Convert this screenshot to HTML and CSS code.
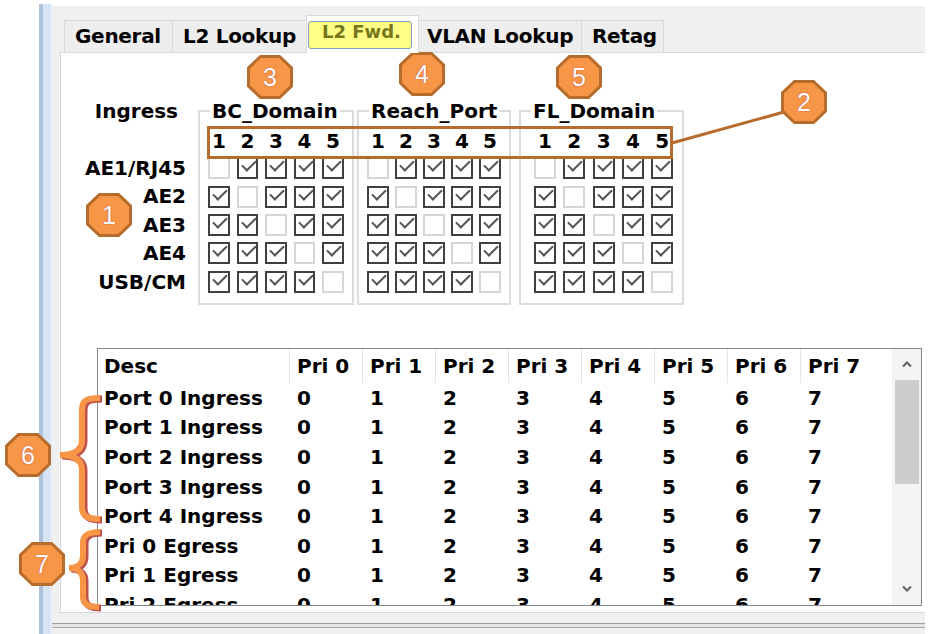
FILE: index.html
```html
<!DOCTYPE html>
<html>
<head>
<meta charset="utf-8">
<title>L2 Fwd.</title>
<link rel="stylesheet" href="styles.css">
</head>
<body>
<div class="window">
  <div class="sidebar"></div>
  <div class="main">
    <div class="tabs">
      <div class="tab t-gen">General</div>
      <div class="tab t-l2l">L2 Lookup</div>
      <div class="tab active"><span class="hl">L2 Fwd.</span></div>
      <div class="tab t-vlan">VLAN Lookup</div>
      <div class="tab t-retag">Retag</div>
    </div>
    <div class="panel">
      <div class="matrix">
        <div class="labels">
          <div class="lbl head">Ingress</div>
          <div class="lbl-gap"></div>
          <div class="lbl">AE1/RJ45</div>
          <div class="lbl">AE2</div>
          <div class="lbl">AE3</div>
          <div class="lbl">AE4</div>
          <div class="lbl">USB/CM</div>
        </div>
        <div class="grp grp-bc">
          <div class="grp-title">BC_Domain</div>
          <div class="nums"><span>1</span><span>2</span><span>3</span><span>4</span><span>5</span></div>
          <div class="cbrow first"><span class="cb"></span><span class="cb on"></span><span class="cb on"></span><span class="cb on"></span><span class="cb on"></span></div>
          <div class="cbrow"><span class="cb on"></span><span class="cb"></span><span class="cb on"></span><span class="cb on"></span><span class="cb on"></span></div>
          <div class="cbrow"><span class="cb on"></span><span class="cb on"></span><span class="cb"></span><span class="cb on"></span><span class="cb on"></span></div>
          <div class="cbrow"><span class="cb on"></span><span class="cb on"></span><span class="cb on"></span><span class="cb"></span><span class="cb on"></span></div>
          <div class="cbrow"><span class="cb on"></span><span class="cb on"></span><span class="cb on"></span><span class="cb on"></span><span class="cb"></span></div>
        </div>
        <div class="grp grp-rp">
          <div class="grp-title">Reach_Port</div>
          <div class="nums"><span>1</span><span>2</span><span>3</span><span>4</span><span>5</span></div>
          <div class="cbrow first"><span class="cb"></span><span class="cb on"></span><span class="cb on"></span><span class="cb on"></span><span class="cb on"></span></div>
          <div class="cbrow"><span class="cb on"></span><span class="cb"></span><span class="cb on"></span><span class="cb on"></span><span class="cb on"></span></div>
          <div class="cbrow"><span class="cb on"></span><span class="cb on"></span><span class="cb"></span><span class="cb on"></span><span class="cb on"></span></div>
          <div class="cbrow"><span class="cb on"></span><span class="cb on"></span><span class="cb on"></span><span class="cb"></span><span class="cb on"></span></div>
          <div class="cbrow"><span class="cb on"></span><span class="cb on"></span><span class="cb on"></span><span class="cb on"></span><span class="cb"></span></div>
        </div>
        <div class="grp grp-fl">
          <div class="grp-title">FL_Domain</div>
          <div class="nums"><span>1</span><span>2</span><span>3</span><span>4</span><span>5</span></div>
          <div class="cbrow first"><span class="cb"></span><span class="cb on"></span><span class="cb on"></span><span class="cb on"></span><span class="cb on"></span></div>
          <div class="cbrow"><span class="cb on"></span><span class="cb"></span><span class="cb on"></span><span class="cb on"></span><span class="cb on"></span></div>
          <div class="cbrow"><span class="cb on"></span><span class="cb on"></span><span class="cb"></span><span class="cb on"></span><span class="cb on"></span></div>
          <div class="cbrow"><span class="cb on"></span><span class="cb on"></span><span class="cb on"></span><span class="cb"></span><span class="cb on"></span></div>
          <div class="cbrow"><span class="cb on"></span><span class="cb on"></span><span class="cb on"></span><span class="cb on"></span><span class="cb"></span></div>
        </div>
      </div>

      <div class="list">
        <div class="grid">
          <div class="row hdr"><div class="c d">Desc</div><div class="c">Pri 0</div><div class="c">Pri 1</div><div class="c">Pri 2</div><div class="c">Pri 3</div><div class="c">Pri 4</div><div class="c">Pri 5</div><div class="c">Pri 6</div><div class="c">Pri 7</div></div>
          <div class="row"><div class="c d">Port 0 Ingress</div><div class="c">0</div><div class="c">1</div><div class="c">2</div><div class="c">3</div><div class="c">4</div><div class="c">5</div><div class="c">6</div><div class="c">7</div></div>
          <div class="row"><div class="c d">Port 1 Ingress</div><div class="c">0</div><div class="c">1</div><div class="c">2</div><div class="c">3</div><div class="c">4</div><div class="c">5</div><div class="c">6</div><div class="c">7</div></div>
          <div class="row"><div class="c d">Port 2 Ingress</div><div class="c">0</div><div class="c">1</div><div class="c">2</div><div class="c">3</div><div class="c">4</div><div class="c">5</div><div class="c">6</div><div class="c">7</div></div>
          <div class="row"><div class="c d">Port 3 Ingress</div><div class="c">0</div><div class="c">1</div><div class="c">2</div><div class="c">3</div><div class="c">4</div><div class="c">5</div><div class="c">6</div><div class="c">7</div></div>
          <div class="row"><div class="c d">Port 4 Ingress</div><div class="c">0</div><div class="c">1</div><div class="c">2</div><div class="c">3</div><div class="c">4</div><div class="c">5</div><div class="c">6</div><div class="c">7</div></div>
          <div class="row"><div class="c d">Pri 0 Egress</div><div class="c">0</div><div class="c">1</div><div class="c">2</div><div class="c">3</div><div class="c">4</div><div class="c">5</div><div class="c">6</div><div class="c">7</div></div>
          <div class="row"><div class="c d">Pri 1 Egress</div><div class="c">0</div><div class="c">1</div><div class="c">2</div><div class="c">3</div><div class="c">4</div><div class="c">5</div><div class="c">6</div><div class="c">7</div></div>
          <div class="row"><div class="c d">Pri 2 Egress</div><div class="c">0</div><div class="c">1</div><div class="c">2</div><div class="c">3</div><div class="c">4</div><div class="c">5</div><div class="c">6</div><div class="c">7</div></div>
        </div>
        <div class="scroll">
          <div class="sb-btn"><svg width="12" height="8" viewBox="0 0 12 8"><polyline points="2,6.5 6,2.5 10,6.5" fill="none" stroke="#606060" stroke-width="2"/></svg></div>
          <div class="thumb"></div>
          <div class="sb-space"></div>
          <div class="sb-btn"><svg width="12" height="8" viewBox="0 0 12 8"><polyline points="2,1.5 6,5.5 10,1.5" fill="none" stroke="#606060" stroke-width="2"/></svg></div>
        </div>
      </div>
    </div>
    <div class="footer"></div>
  </div>
</div>

<div class="callout-rect"></div>
<svg class="overlay" width="930" height="634" viewBox="0 0 930 634">
  <line x1="672" y1="143" x2="784" y2="112" stroke="#b66c2c" stroke-width="3"/>
  <path d="M100 398 C87 398 82 400 82 410 L82 440 C82 450 75 455 60 455 C75 455 82 460 82 470 L82 507 C82 516 87 519 100 519" fill="none" stroke="#c0504d" stroke-width="7" transform="translate(2 1)"/>
  <path d="M100 398 C87 398 82 400 82 410 L82 440 C82 450 75 455 60 455 C75 455 82 460 82 470 L82 507 C82 516 87 519 100 519" fill="none" stroke="#f79646" stroke-width="6"/>
  <path d="M100 532 C88 532 83 535 83 543 L83 556 C83 563 78 568 69 568 C78 568 83 573 83 580 L83 597 C83 604 88 607 99 607" fill="none" stroke="#c0504d" stroke-width="7" transform="translate(2 1)"/>
  <path d="M100 532 C88 532 83 535 83 543 L83 556 C83 563 78 568 69 568 C78 568 83 573 83 580 L83 597 C83 604 88 607 99 607" fill="none" stroke="#f79646" stroke-width="6"/>
</svg>

<div class="badge b1"><svg class="oct" viewBox="0 0 46 44"><polygon points="13.5,1.5 32.5,1.5 44.5,13 44.5,31 32.5,42.5 13.5,42.5 1.5,31 1.5,13"/></svg><span>1</span></div>
<div class="badge b2"><svg class="oct" viewBox="0 0 46 44"><polygon points="13.5,1.5 32.5,1.5 44.5,13 44.5,31 32.5,42.5 13.5,42.5 1.5,31 1.5,13"/></svg><span>2</span></div>
<div class="badge b3"><svg class="oct" viewBox="0 0 46 44"><polygon points="13.5,1.5 32.5,1.5 44.5,13 44.5,31 32.5,42.5 13.5,42.5 1.5,31 1.5,13"/></svg><span>3</span></div>
<div class="badge b4"><svg class="oct" viewBox="0 0 46 44"><polygon points="13.5,1.5 32.5,1.5 44.5,13 44.5,31 32.5,42.5 13.5,42.5 1.5,31 1.5,13"/></svg><span>4</span></div>
<div class="badge b5"><svg class="oct" viewBox="0 0 46 44"><polygon points="13.5,1.5 32.5,1.5 44.5,13 44.5,31 32.5,42.5 13.5,42.5 1.5,31 1.5,13"/></svg><span>5</span></div>
<div class="badge b6"><svg class="oct" viewBox="0 0 46 44"><polygon points="13.5,1.5 32.5,1.5 44.5,13 44.5,31 32.5,42.5 13.5,42.5 1.5,31 1.5,13"/></svg><span>6</span></div>
<div class="badge b7"><svg class="oct" viewBox="0 0 46 44"><polygon points="13.5,1.5 32.5,1.5 44.5,13 44.5,31 32.5,42.5 13.5,42.5 1.5,31 1.5,13"/></svg><span>7</span></div>
</body>
</html>
```
FILE: styles.css
```css
* { box-sizing: border-box; }

body {
  margin: 0;
  width: 930px;
  height: 634px;
  overflow: hidden;
  position: relative;
  background: #ffffff;
  font-family: "DejaVu Sans", Verdana, sans-serif;
  font-weight: bold;
  font-size: 20px;
  color: #000000;
}

.window {
  display: flex;
  margin: 4px 0 0 39px;
  width: 886px;
  height: 630px;
}

.sidebar {
  width: 13px;
  border-left: 4px solid #adc3dc;
  border-right: 2px solid #e4ecf5;
  background: #d5e4f4;
}

.main {
  flex: 1;
  margin-top: 2px;
  padding-top: 14px;
  background: #f0f0f0;
  display: flex;
  flex-direction: column;
}

/* tabs */
.tabs {
  display: flex;
  align-items: flex-end;
  height: 32px;
  margin-left: 12px;
}
.tab {
  height: 32px;
  padding: 0 0 0 10px;
  margin-right: -1px;
  border: 1px solid #d9d9d9;
  border-bottom: none;
  background: #eeeeee;
  line-height: 30px;
  white-space: nowrap;
  letter-spacing: -0.3px;
  overflow: hidden;
}
.t-gen { width: 109px; padding-left: 10px; }
.t-l2l { width: 135px; padding-left: 10px; }
.t-vlan { width: 164px; padding-left: 8px; }
.t-retag { width: 83px; padding-left: 10px; }
.tab.active {
  width: 113px;
  height: 38px;
  margin-bottom: -1px;
  padding: 5px 0 0 1px;
  background: #ffffff;
  position: relative;
  z-index: 1;
  letter-spacing: 0;
}
.hl {
  display: block;
  width: 104px;
  height: 28px;
  line-height: 20px;
  padding-left: 13px;
  font-size: 18px;
  background: #ffff86;
  border: 1px solid #7f9fc6;
  border-radius: 3px;
  color: #76761c;
}

/* panel */
.panel {
  margin-left: 8px;
  height: 561px;
  background: #ffffff;
  border: 1px solid #d9d9d9;
  border-right: none;
}

.matrix {
  display: flex;
  align-items: flex-start;
  margin-top: 46px;
}
.labels {
  width: 125px;
  text-align: right;
}
.lbl {
  height: 28.4px;
  line-height: 28.4px;
  white-space: nowrap;
}
.lbl.head {
  height: 24px;
  line-height: 24px;
  padding-right: 8px;
}
.lbl-gap { height: 31px; }

.grp {
  margin-top: 11px;
  border: 2px solid #dcdcdc;
  padding: 0 8px 7px 8px;
}
.grp-bc { margin-left: 12px; width: 156px; }
.grp-rp { margin-left: 3px; width: 154px; }
.grp-fl { margin-left: 8px; width: 165px; padding-left: 13px; }

.grp-title {
  width: max-content;
  height: 24px;
  line-height: 24px;
  margin: -13px 0 0 2px;
  padding: 0 2px;
  background: #ffffff;
}
.grp-fl .grp-title { margin-left: -3px; }

.nums {
  display: flex;
  gap: 6.6px;
  height: 22px;
  line-height: 22px;
  margin-top: 7px;
}
.nums span {
  width: 22px;
  text-align: center;
}
.cbrow {
  display: flex;
  align-items: center;
  gap: 6.6px;
  height: 28.4px;
}
.cbrow.first { margin-top: 2px; }
.grp-rp .nums, .grp-rp .cbrow { gap: 6px; }
.grp-fl .nums, .grp-fl .cbrow { gap: 7.3px; }

.cb {
  position: relative;
  width: 22px;
  height: 22px;
  border: 2px solid #d6d6d6;
  background: #ffffff;
}
.cb.on { border-color: #404040; }
.cb.on::after {
  content: "";
  position: absolute;
  left: 3px;
  top: 1px;
  width: 12px;
  height: 6px;
  border-left: 2px solid #555555;
  border-bottom: 2px solid #555555;
  transform: rotate(-45deg);
}

/* list view */
.list {
  display: flex;
  width: 825px;
  height: 258px;
  margin: 43px 0 0 36px;
  border: 1px solid #828790;
  background: #ffffff;
}
.grid {
  flex: 1;
  overflow: hidden;
}
.row {
  display: flex;
  align-items: center;
  height: 29.6px;
  white-space: nowrap;
}
.row.hdr {
  height: 34px;
  align-items: stretch;
}
.c {
  flex: none;
  width: 73px;
  padding-left: 7px;
}
.c.d {
  width: 192px;
  padding-left: 6px;
}
.hdr .c {
  display: flex;
  align-items: center;
  border-right: 1px solid #e5e5e5;
}
.hdr .c:last-child { border-right: none; }

.scroll {
  width: 29px;
  display: flex;
  flex-direction: column;
  align-items: center;
  background: #f3f3f3;
}
.sb-btn {
  height: 31px;
  width: 100%;
  display: flex;
  align-items: center;
  justify-content: center;
}
.thumb {
  width: 24px;
  height: 104px;
  background: #cdcdcd;
}
.sb-space { flex: 1; }

.footer {
  margin-top: 10px;
  height: 5px;
  border-top: 1px solid #a0a0a0;
  border-bottom: 1px solid #a8a8a8;
  background: #e4e4e4;
}

/* annotations */
.callout-rect {
  position: absolute;
  left: 207px;
  top: 126px;
  width: 466px;
  height: 33px;
  border: 3px solid #b66c2c;
}
.overlay {
  position: absolute;
  left: 0;
  top: 0;
  pointer-events: none;
}
.badge {
  position: absolute;
  width: 46px;
  height: 44px;
  display: flex;
  align-items: center;
  justify-content: center;
  font-family: "Liberation Sans", Arial, sans-serif;
  font-weight: normal;
  font-size: 25px;
  color: #ffffff;
}
.badge .oct {
  position: absolute;
  left: 0;
  top: 0;
  width: 46px;
  height: 44px;
}
.badge .oct polygon {
  fill: #f79646;
  stroke: #b66c2c;
  stroke-width: 3;
}
.badge span {
  position: relative;
  text-shadow: 0 0 1px #c0504d, 0 0 1px #c0504d;
}
.b1 { left: 86px; top: 193px; }
.b2 { left: 781px; top: 80px; }
.b3 { left: 247px; top: 55px; }
.b4 { left: 399px; top: 52px; }
.b5 { left: 556px; top: 55px; }
.b6 { left: 5px; top: 433px; }
.b7 { left: 19px; top: 542px; }
```
